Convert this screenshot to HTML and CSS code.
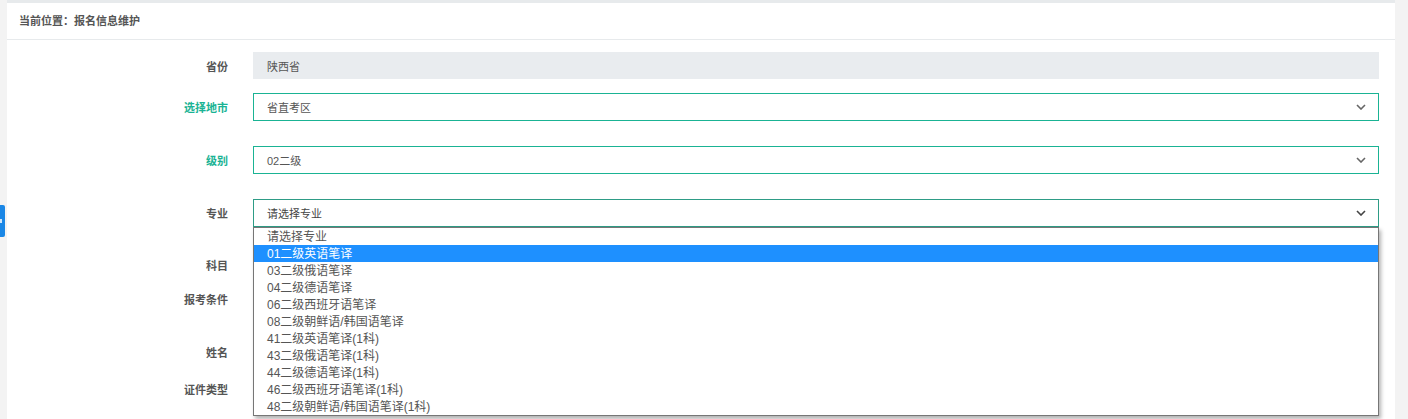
FILE: index.html
```html
<!DOCTYPE html>
<html lang="zh-CN">
<head>
    <meta charset="UTF-8">
    <meta name="viewport" content="width=device-width, initial-scale=1.0">
    <title>报名信息维护</title>
    <link rel="stylesheet" href="styles.css">
</head>
<body>

    <div class="side-tab"><span></span></div>

    <div class="page">
        <div class="card">
            <div class="card-title">当前位置：报名信息维护</div>

            <form class="form" onsubmit="return false;">
                <div class="row first">
                    <label class="label">省份</label>
                    <div class="control disabled">陕西省</div>
                </div>

                <div class="row gap-l">
                    <label class="label ok">选择地市</label>
                    <div class="control select valid">
                        <span>省直考区</span>
                        <svg class="arrow" width="10" height="6" viewBox="0 0 10 6"><path d="M1 1 L5 5 L9 1" fill="none" stroke="#666" stroke-width="1.6"/></svg>
                    </div>
                </div>

                <div class="row gap-l">
                    <label class="label ok">级别</label>
                    <div class="control select valid">
                        <span>02二级</span>
                        <svg class="arrow" width="10" height="6" viewBox="0 0 10 6"><path d="M1 1 L5 5 L9 1" fill="none" stroke="#666" stroke-width="1.6"/></svg>
                    </div>
                </div>

                <div class="row gap-x">
                    <label class="label">专业</label>
                    <div class="control select focus">
                        <span>请选择专业</span>
                        <svg class="arrow" width="10" height="6" viewBox="0 0 10 6"><path d="M1 1 L5 5 L9 1" fill="none" stroke="#444" stroke-width="1.6"/></svg>

                        <ul class="dropdown">
                            <li>请选择专业</li>
                            <li class="active">01二级英语笔译</li>
                            <li>03二级俄语笔译</li>
                            <li>04二级德语笔译</li>
                            <li>06二级西班牙语笔译</li>
                            <li>08二级朝鲜语/韩国语笔译</li>
                            <li>41二级英语笔译(1科)</li>
                            <li>43二级俄语笔译(1科)</li>
                            <li>44二级德语笔译(1科)</li>
                            <li>46二级西班牙语笔译(1科)</li>
                            <li>48二级朝鲜语/韩国语笔译(1科)</li>
                        </ul>
                    </div>
                </div>

                <div class="row gap-s">
                    <label class="label">科目</label>
                    <div class="control"></div>
                </div>

                <div class="row gap-l">
                    <label class="label">报考条件</label>
                    <div class="control"></div>
                </div>

                <div class="row gap-m">
                    <label class="label">姓名</label>
                    <div class="control"></div>
                </div>

                <div class="row">
                    <label class="label">证件类型</label>
                    <div class="control"></div>
                </div>
            </form>
        </div>
    </div>

</body>
</html>
```

FILE: styles.css
```css
/* 报名信息维护 */
html,
body {
    height: 100%;
}

body {
    margin: 0;
    padding: 0;
    background-color: #f3f3f3;
    font-family: "Liberation Sans", "Noto Sans CJK SC", Arial, sans-serif;
    font-size: 11px;
    color: #555;
    overflow: hidden;
}

.side-tab {
    position: absolute;
    left: 0;
    top: 205px;
    width: 5px;
    height: 32px;
    background-color: #1a87e6;
    border-radius: 0 2px 2px 0;
}

.side-tab span {
    position: absolute;
    left: 0;
    top: 14px;
    width: 2px;
    height: 4px;
    background-color: #cfe6fb;
}

.page {
    height: 100%;
    box-sizing: border-box;
    padding: 0 13px 0 7px;
}

.card {
    height: 100%;
    box-sizing: border-box;
    background-color: #fff;
    border-top: 3px solid #e7eaec;
}

.card-title {
    height: 36px;
    line-height: 36px;
    padding: 0 12px;
    border-bottom: 1px solid #e7eaec;
    font-weight: bold;
    color: #555;
}

.form {
    padding: 12px 16px 0 0;
}

.row {
    display: flex;
    align-items: center;
    height: 28px;
}

.row.first {
    height: 27px;
    margin-bottom: 14px;
}

.row.gap-s {
    margin-bottom: 6px;
}

.row.gap-m {
    margin-bottom: 9px;
}

.row.gap-l {
    margin-bottom: 25px;
}

.row.gap-x {
    margin-bottom: 24px;
}

.label {
    width: 221px;
    margin-right: 25px;
    text-align: right;
    font-weight: bold;
    color: #555;
}

.label.ok {
    color: #1ab394;
}

.control {
    position: relative;
    flex: 1;
    height: 100%;
    box-sizing: border-box;
    border: 1px solid #e5e6e7;
    padding: 0 12px 0 13px;
    display: flex;
    align-items: center;
    justify-content: space-between;
    color: #555;
}

.control.disabled {
    background-color: #e9ecef;
    border-color: #e9ecef;
}

.control.valid {
    border-color: #1ab394;
}

.control.focus {
    border-color: #2e9c86;
    color: #444;
}

.arrow {
    display: block;
}

.dropdown {
    position: absolute;
    left: -1px;
    right: -1px;
    top: 100%;
    margin: 1px 0 0;
    padding: 0;
    list-style: none;
    background-color: #fff;
    border: 1px solid #767676;
    box-shadow: 2px 3px 4px rgba(0, 0, 0, 0.3);
    z-index: 10;
}

.dropdown li {
    height: 15px;
    line-height: 15px;
    padding: 2px 0 0 13px;
    font-size: 12px;
    color: #555;
}

.dropdown li.active {
    background-color: #1e90ff;
    color: #fff;
}
```
